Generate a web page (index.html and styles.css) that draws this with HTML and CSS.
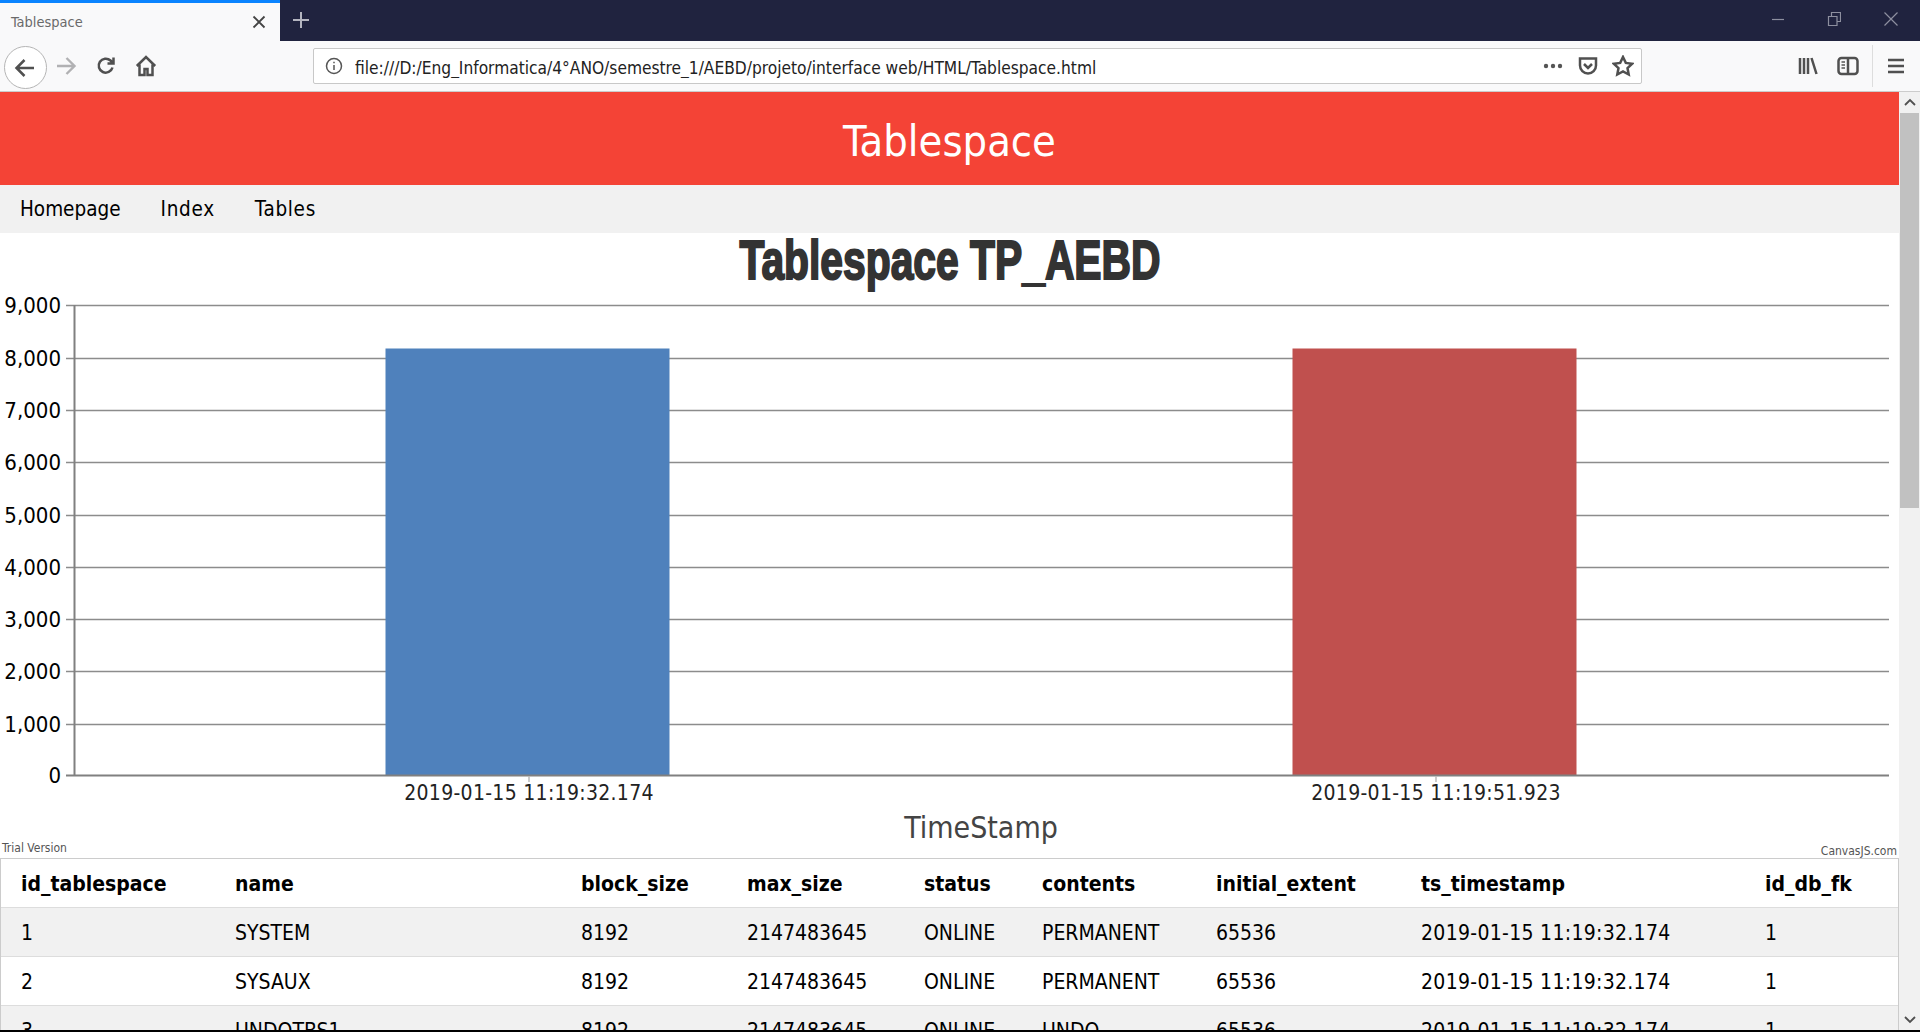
FILE: index.html
```html
<!DOCTYPE html>
<html lang="en">
<head>
<meta charset="utf-8">
<title>Tablespace</title>
<link rel="stylesheet" href="styles.css">
</head>
<body>
<div class="window">
  <div class="tabstrip">
    <div class="tab">
      <span class="tab-title">Tablespace</span>
      <svg class="tab-close" width="14" height="14" viewBox="0 0 14 14"><path d="M1.5 1.5l11 11M12.5 1.5l-11 11"/></svg>
    </div>
    <svg class="new-tab" width="18" height="18" viewBox="0 0 18 18"><path d="M9 1v16M1 9h16"/></svg>
    <div class="win-controls">
      <svg width="14" height="14" viewBox="0 0 14 14"><path d="M1 7.5h12"/></svg>
      <svg width="14" height="14" viewBox="0 0 14 14"><path d="M1.5 4.5h8.500v9h-8.500zM4.500 4V.5h9v9H10.500"/></svg>
      <svg width="16" height="16" viewBox="0 0 16 16"><path d="M1.500 1.500l13 13M14.500 1.500l-13 13"/></svg>
    </div>
  </div>
  <div class="toolbar">
    <div class="nav-buttons">
      <div class="back">
        <svg class="ico" width="22" height="20" viewBox="0 0 22 20"><path class="s2" d="M20 10H3M10.500 2L2.500 10l8 8"/></svg>
      </div>
      <svg class="forward" width="22" height="20" viewBox="0 0 22 20"><path class="s2" d="M2 10h17M11.500 2l8 8-8 8"/></svg>
      <svg class="ico reload" width="20" height="20" viewBox="0 0 20 20"><path class="s2" d="M16.500 11.500a7 7 0 1 1-2-7L17 7M17.500 1.500V7.500h-6"/></svg>
      <svg class="ico home" width="22" height="22" viewBox="0 0 22 22"><path class="s2" d="M1.800 11L11 2l9.200 9M4.500 9.500V20h5v-6h3v6h5V9.500"/></svg>
    </div>
    <div class="urlbar">
      <svg class="ico info" width="18" height="18" viewBox="0 0 18 18"><circle cx="9" cy="9" r="7.500" class="s1"/><path class="s1" d="M9 8v5M9 4.800v1.400"/></svg>
      <span class="url">file:///D:/Eng_Informatica/4°ANO/semestre_1/AEBD/projeto/interface web/HTML/Tablespace.html</span>
      <svg class="ico dots" width="20" height="6" viewBox="0 0 20 6"><circle cx="3" cy="3" r="2.200"/><circle cx="10" cy="3" r="2.200"/><circle cx="17" cy="3" r="2.200"/></svg>
      <svg class="ico" width="20" height="20" viewBox="0 0 20 20"><path class="s2" d="M2 2.500h16v7a8 8 0 0 1-16 0zM6 8l4 4 4-4"/></svg>
      <svg class="ico" width="22" height="22" viewBox="0 0 22 22"><path class="s2" d="M11 2l2.800 5.900 6.400.8-4.700 4.400 1.200 6.400L11 16.400l-5.700 3.100 1.200-6.400L1.800 8.700l6.400-.8z"/></svg>
    </div>
    <div class="tools">
      <svg class="ico" width="20" height="20" viewBox="0 0 20 20"><path class="s2" d="M2 2v16M6 2v16M10 2v16M13.500 2l5 16"/></svg>
      <svg class="ico" width="22" height="20" viewBox="0 0 22 20"><rect class="s2" x="1.500" y="2" width="19" height="16" rx="3"/><path class="s2" d="M11 2v16"/><path class="s1" d="M4.500 6h3.500M4.500 9h3.500M4.500 12h3.500"/></svg>
      <span class="tool-sep"></span>
      <svg class="ico" width="18" height="16" viewBox="0 0 18 16"><path class="s2" d="M1 2h16M1 8h16M1 14h16"/></svg>
    </div>
  </div>
  <div class="viewport">
    <main class="page">
      <header class="banner">Tablespace</header>
      <nav class="menu">
        <a class="menu-item">Homepage</a>
        <a class="menu-item">Index</a>
        <a class="menu-item">Tables</a>
      </nav>
      <section class="chart">
        <svg class="chart-svg" width="1899" height="625" viewBox="0 233 1899 625">
          <text class="chart-title" x="950" y="279" text-anchor="middle" textLength="421" lengthAdjust="spacingAndGlyphs">Tablespace TP_AEBD</text>
          <g class="grid">
            <path d="M66 305.500H1889M66 358.500H1889M66 410.500H1889M66 462.500H1889M66 515.500H1889M66 567.500H1889M66 619.500H1889M66 671.500H1889M66 724.500H1889"/>
          </g>
          <rect class="bar-blue" x="385.500" y="348.500" width="284" height="426.500"/>
          <rect class="bar-red" x="1292.500" y="348.500" width="284" height="426.500"/>
          <path class="axis" d="M74.500 305V776M66 775.500H1889"/>
          <path class="tick" d="M529 776v6M1436 776v6"/>
          <g class="y-labels" text-anchor="end">
            <text x="61" y="313">9,000</text>
            <text x="61" y="366">8,000</text>
            <text x="61" y="418">7,000</text>
            <text x="61" y="470">6,000</text>
            <text x="61" y="523">5,000</text>
            <text x="61" y="575">4,000</text>
            <text x="61" y="627">3,000</text>
            <text x="61" y="679">2,000</text>
            <text x="61" y="732">1,000</text>
            <text x="61" y="783">0</text>
          </g>
          <g class="x-labels" text-anchor="middle">
            <text x="529" y="800">2019-01-15 11:19:32.174</text>
            <text x="1436" y="800">2019-01-15 11:19:51.923</text>
          </g>
          <text class="axis-title" x="981" y="838" text-anchor="middle">TimeStamp</text>
          <text class="credit" x="2" y="852">Trial Version</text>
          <text class="credit" x="1897" y="855" text-anchor="end">CanvasJS.com</text>
        </svg>
      </section>
      <table class="data">
        <colgroup>
          <col class="c1"><col class="c2"><col class="c3"><col class="c4"><col class="c5"><col class="c6"><col class="c7"><col class="c8"><col class="c9">
        </colgroup>
        <thead>
          <tr><th>id_tablespace</th><th>name</th><th>block_size</th><th>max_size</th><th>status</th><th>contents</th><th>initial_extent</th><th>ts_timestamp</th><th>id_db_fk</th></tr>
        </thead>
        <tbody>
          <tr><td>1</td><td>SYSTEM</td><td>8192</td><td>2147483645</td><td>ONLINE</td><td>PERMANENT</td><td>65536</td><td class="ts">2019-01-15 11:19:32.174</td><td>1</td></tr>
          <tr><td>2</td><td>SYSAUX</td><td>8192</td><td>2147483645</td><td>ONLINE</td><td>PERMANENT</td><td>65536</td><td class="ts">2019-01-15 11:19:32.174</td><td>1</td></tr>
          <tr><td>3</td><td>UNDOTBS1</td><td>8192</td><td>2147483645</td><td>ONLINE</td><td>UNDO</td><td>65536</td><td class="ts">2019-01-15 11:19:32.174</td><td>1</td></tr>
        </tbody>
      </table>
    </main>
    <div class="scrollbar">
      <svg class="arrow" width="20" height="20" viewBox="0 0 20 20"><path d="M5 13l5-5 5 5"/></svg>
      <div class="thumb-track"><div class="thumb"></div></div>
      <svg class="arrow" width="20" height="20" viewBox="0 0 20 20"><path d="M5 7l5 5 5-5"/></svg>
    </div>
  </div>
  <div class="window-edge"></div>
</div>
</body>
</html>
```

FILE: styles.css
```css
* { box-sizing: border-box; }
html, body { margin: 0; height: 100%; overflow: hidden; background: #fff; }
body { font-family: "DejaVu Sans", sans-serif; font-stretch: condensed; color: #000; }
svg { display: block; flex: none; fill: none; }

.window { height: 1032px; display: flex; flex-direction: column; }

.tabstrip { height: 41px; flex: none; background: #20233f; display: flex; align-items: center; }
.tab { width: 280px; height: 41px; background: #f9f9fa; border-top: 3px solid #0a84ff; display: flex; align-items: center; justify-content: space-between; padding: 0 14px 0 11px; }
.tab-title { font-size: 14.500px; color: #6a6a6a; }
.tab-close path { stroke: #444; stroke-width: 1.800; }
.new-tab { margin-left: 12px; margin-top: -1px; }
.new-tab path { stroke: #b4b5c0; stroke-width: 2; }
.win-controls { margin-left: auto; display: flex; align-items: center; gap: 42px; padding-right: 21px; margin-top: -3px; }
.win-controls path { stroke: #8d8f9f; stroke-width: 1.200; }

.toolbar { height: 51px; flex: none; background: #f9f9fa; border-bottom: 1px solid #ccc; display: flex; align-items: center; }
.ico { color: #555; }
.s1 { stroke: #555; stroke-width: 1.500; fill: none; }
.s2 { stroke: #505050; stroke-width: 2.500; fill: none; }
.dots circle { fill: #555; }
.nav-buttons { width: 313px; flex: none; display: flex; align-items: center; padding-left: 4px; height: 100%; }
.back { width: 43px; height: 43px; border: 1px solid #b5b5b5; border-radius: 50%; background: #fff; display: flex; align-items: center; justify-content: center; margin-top: 3px; }
.back .ico { margin-left: -2px; }
.forward { margin-left: 8px; }
.forward path { stroke: #b1b1b3; stroke-width: 2.400; }
.reload { margin-left: 19px; }
.home { margin-left: 19px; }

.urlbar { width: 1329px; height: 36px; background: #fff; border: 1px solid #c8c8c8; border-radius: 2px; display: flex; align-items: center; padding-left: 11px; padding-right: 7px; gap: 12px; }
.url { font-size: 17.200px; color: #222; flex: 1; margin-top: 4px; white-space: nowrap; overflow: hidden; }
.urlbar .dots { margin-right: 3px; }
.urlbar .ico:last-child { margin-left: 2px; }

.tools { flex: 1; display: flex; align-items: center; padding-left: 156px; }
.tools .ico:nth-child(2) { margin-left: 19px; }
.tool-sep { width: 1px; height: 42px; background: #ddd; margin: 0 14px 0 13px; }

.viewport { flex: 1; min-height: 0; display: flex; }
.page { flex: 1; min-width: 0; overflow: hidden; }

.banner { height: 93px; background: #f44336; color: #fff; font-size: 43px; display: flex; align-items: center; justify-content: center; padding-top: 5px; }
.menu { height: 48px; background: #f1f1f1; display: flex; align-items: center; }
.menu-item { padding: 0 20px; font-size: 20.500px; color: #000; }
.menu-item + .menu-item { letter-spacing: .7px; }

.chart { height: 625px; }
.chart-svg text { font-family: "DejaVu Sans", sans-serif; font-stretch: condensed; }
.chart-svg .chart-title { font-family: "Liberation Sans", sans-serif; font-stretch: normal; font-weight: 700; font-size: 55px; fill: #333; stroke: #333; stroke-width: 2px; }
.grid path { stroke: #8c8c8c; stroke-width: 1.500; }
.axis { stroke: #808080; stroke-width: 2; }
.tick { stroke: #bbb; stroke-width: 1.500; }
.bar-blue { fill: #4f81bc; }
.bar-red { fill: #c0504e; }
.y-labels text { font-size: 22px; fill: #000; }
.x-labels text { font-size: 21px; letter-spacing: .3px; fill: #222; }
.axis-title { font-size: 30px; fill: #444; }
.credit { font-size: 12px; fill: #555; }

.data { width: 1899px; table-layout: fixed; border-collapse: separate; border-spacing: 0; border: 1px solid #ccc; border-bottom: 0; font-size: 21px; }
.c1 { width: 214px; } .c2 { width: 346px; } .c3 { width: 166px; } .c4 { width: 177px; } .c5 { width: 118px; }
.c6 { width: 174px; } .c7 { width: 205px; } .c8 { width: 344px; } .c9 { width: 153px; }
.data th, .data td { height: 49px; padding: 2px 0 0 20px; text-align: left; border-bottom: 1px solid #ddd; white-space: nowrap; }
.data th { font-weight: 700; font-size: 21px; }
.data .ts { letter-spacing: .3px; }
.data tbody tr:nth-child(odd) { background: #f1f1f1; }

.scrollbar { width: 21px; flex: none; background: #f1f1f1; display: flex; flex-direction: column; align-items: center; }
.scrollbar .arrow { flex: none; }
.arrow path { stroke: #505050; stroke-width: 1.800; }
.thumb-track { flex: 1; width: 100%; padding: 1px 1px 0 1px; }
.thumb { height: 395px; background: #c1c1c1; }

.window-edge { height: 2px; flex: none; background: #000; }
```
